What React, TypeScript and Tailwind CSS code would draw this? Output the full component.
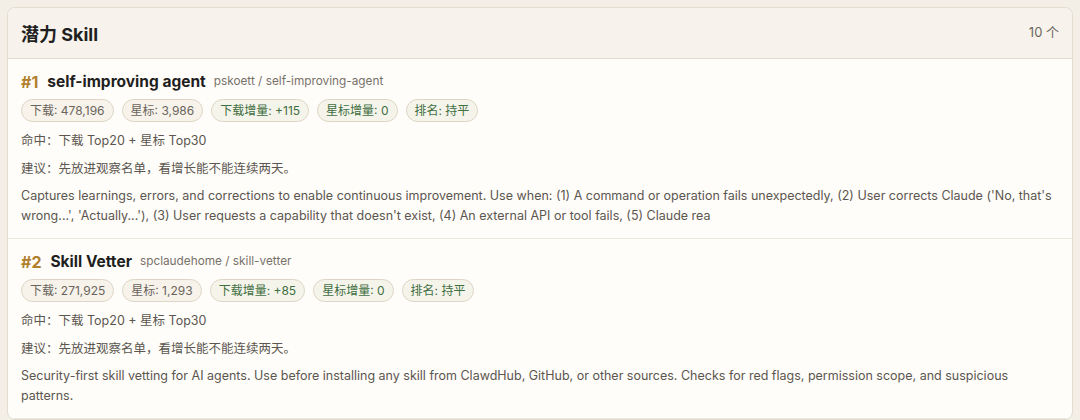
import React from "react";

type Skill = {
  rank: number;
  name: string;
  slug: string;
  downloads: string;
  stars: string;
  dlDelta: string;
  starDelta: string;
  rankChange: string;
  hit: string;
  advice: string;
  summary: string;
};

const skills: Skill[] = [
  {
    rank: 1,
    name: "self-improving agent",
    slug: "pskoett / self-improving-agent",
    downloads: "478,196",
    stars: "3,986",
    dlDelta: "+115",
    starDelta: "0",
    rankChange: "持平",
    hit: "命中：下载 Top20 + 星标 Top30",
    advice: "建议：先放进观察名单，看增长能不能连续两天。",
    summary:
      "Captures learnings, errors, and corrections to enable continuous improvement. Use when: (1) A command or operation fails unexpectedly, (2) User corrects Claude ('No, that's wrong...', 'Actually...'), (3) User requests a capability that doesn't exist, (4) An external API or tool fails, (5) Claude rea",
  },
  {
    rank: 2,
    name: "Skill Vetter",
    slug: "spclaudehome / skill-vetter",
    downloads: "271,925",
    stars: "1,293",
    dlDelta: "+85",
    starDelta: "0",
    rankChange: "持平",
    hit: "命中：下载 Top20 + 星标 Top30",
    advice: "建议：先放进观察名单，看增长能不能连续两天。",
    summary:
      "Security-first skill vetting for AI agents. Use before installing any skill from ClawdHub, GitHub, or other sources. Checks for red flags, permission scope, and suspicious patterns.",
  },
];

function Chip({ children, green }: { children: React.ReactNode; green?: boolean }) {
  return (
    <span
      className={`h-[23px] px-2 flex items-center rounded-full border border-[#ddd5c6] text-[12px] ${
        green ? "bg-[#f5f4ea] text-[#3f6e42]" : "bg-[#f7f3eb] text-[#6a645c]"
      }`}
    >
      {children}
    </span>
  );
}

export default function App() {
  return (
    <div
      className="h-[420px] overflow-hidden bg-[#f3efe7] pt-[7px] pl-[7px] pr-[7px]"
      style={{ fontFamily: "Inter, 'Noto Sans CJK SC', sans-serif" }}
    >
      <div className="rounded-lg border border-[#e2dccf] bg-[#fffdf9] overflow-hidden">
        {/* Header */}
        <div className="h-[51px] flex items-center justify-between px-[13px] bg-[#f7f3ec] border-b border-[#e2dccf]">
          <h2 className="pt-[2px] text-[18px] font-bold text-[#1f1f1f]">潜力 Skill</h2>
          <span className="text-[13px] text-[#6b665e]">10 个</span>
        </div>

        {skills.map((s) => (
          <div key={s.rank} className="px-[13px] pt-3 pb-3 border-b border-[#ece7dc]">
            <div className="h-[22px] flex items-center">
              <span className="text-[16px] font-bold text-[#b0802c] mr-[9px]">#{s.rank}</span>
              <span className="text-[15.5px] font-bold text-[#1f1f1f] mr-2">{s.name}</span>
              <span className="text-[11.8px] text-[#77716a]">{s.slug}</span>
            </div>
            <div className="mt-[6px] flex gap-2">
              <Chip>下载: {s.downloads}</Chip>
              <Chip>星标: {s.stars}</Chip>
              <Chip green>下载增量: {s.dlDelta}</Chip>
              <Chip green>星标增量: {s.starDelta}</Chip>
              <Chip green>排名: {s.rankChange}</Chip>
            </div>
            <p className="mt-[9px] leading-[20px] text-[12.5px] text-[#5b5650]">{s.hit}</p>
            <p className="mt-2 leading-[20px] text-[12.5px] text-[#5b5650]">{s.advice}</p>
            <p className="mt-[7px] leading-[20px] text-[12.5px] text-[#5b5650]">{s.summary}</p>
          </div>
        ))}
      </div>
    </div>
  );
}
